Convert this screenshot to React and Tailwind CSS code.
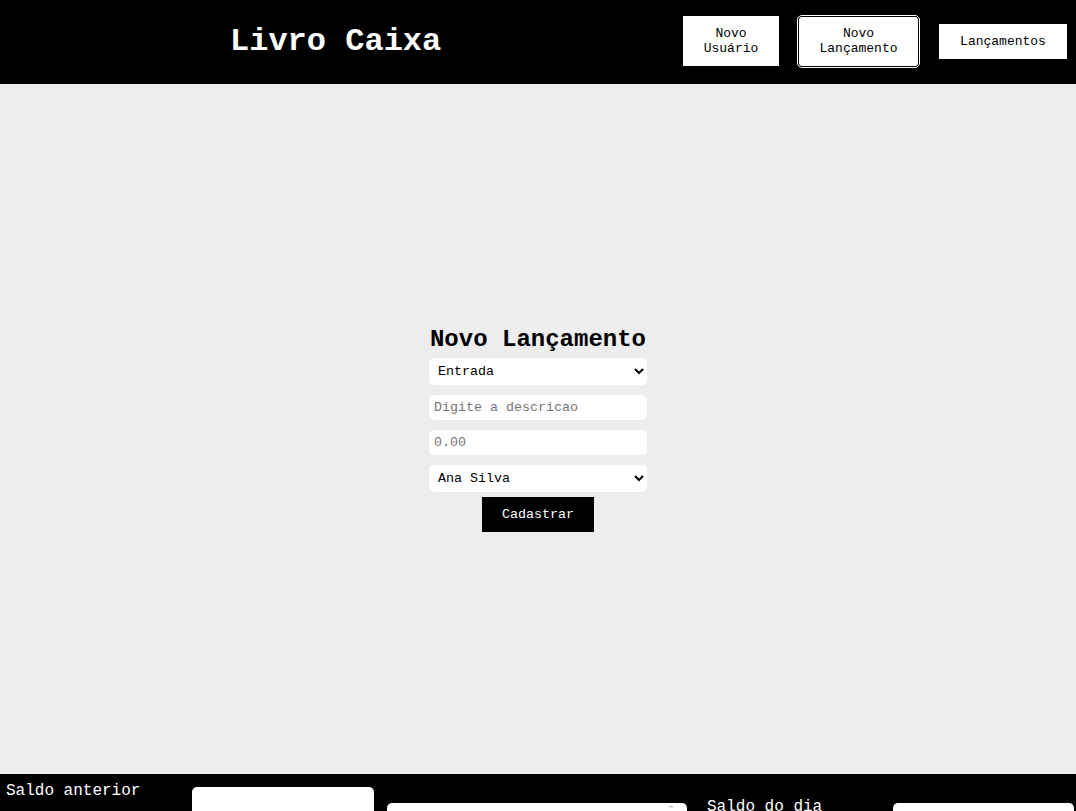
import React from "react";

function Header() {
  return (
    <header className="h-[84px] bg-black flex items-center justify-between pl-[230px] pr-[9px]">
      <h1 className="text-white text-[32px] font-bold leading-none">Livro Caixa</h1>
      <nav className="flex items-center gap-[18px] mb-[2px] text-[13px] leading-[15px] text-black">
        <button className="w-[96px] h-[50px] bg-white px-5 py-[10px] text-center">
          Novo Usuário
        </button>
        <div className="border border-white rounded-[5px] p-[1px] bg-black">
          <button className="w-[119px] h-[49px] bg-white rounded-[3px] px-5 text-center">
            Novo Lançamento
          </button>
        </div>
        <button className="w-[128px] h-[35px] bg-white px-5 ml-[1px]">Lançamentos</button>
      </nav>
    </header>
  );
}

function Form() {
  return (
    <main className="h-[690px] bg-[#ededed] flex items-center justify-center">
      <form className="w-[218px] flex flex-col items-center" onSubmit={(e) => e.preventDefault()}>
        <h2 className="text-[24px] font-bold leading-[27px] mb-[5px] whitespace-nowrap">Novo Lançamento</h2>
        <select className="w-full h-[27px] bg-white rounded-[5px] pl-[5px] pr-[6px] text-[13.33px] outline-none">
          <option>Entrada</option>
          <option>Saída</option>
        </select>
        <input
          className="w-full h-[25px] bg-white rounded-[5px] px-[5px] mt-[10px] text-[13.33px] placeholder:text-[#757575] outline-none"
          placeholder="Digite a descricao"
        />
        <input
          className="w-full h-[25px] bg-white rounded-[5px] px-[5px] mt-[10px] text-[13.33px] placeholder:text-[#757575] outline-none"
          placeholder="0.00"
        />
        <select className="w-full h-[27px] bg-white rounded-[5px] pl-[5px] pr-[6px] mt-[10px] text-[13.33px] outline-none">
          <option>Ana Silva</option>
        </select>
        <button className="mt-[5px] w-[112px] h-[35px] bg-black text-white text-[13.33px]">Cadastrar</button>
      </form>
    </main>
  );
}

function Footer() {
  return (
    <footer className="h-[70px] bg-black flex items-start text-white text-[16px]">
      <p className="ml-[6px] mt-[8px] w-[186px] leading-[18px]">Saldo anterior</p>
      <input className="mt-[13px] w-[182px] h-[30px] bg-white rounded-[5px]" readOnly />
      <div className="ml-[13px] mt-[29px] w-[300px] h-[30px] bg-white rounded-[5px] relative">
        <span className="absolute right-[14px] top-[1px] text-[#777] text-[7px] leading-none">⋯</span>
      </div>
      <p className="ml-[20px] mt-[24px] w-[186px] leading-[18px]">Saldo do dia</p>
      <input className="mt-[29px] w-[181px] h-[30px] bg-white rounded-[5px]" readOnly />
    </footer>
  );
}

export default function App() {
  return (
    <div className="font-['Liberation_Mono','Courier_New',monospace]">
      <Header />
      <Form />
      <Footer />
    </div>
  );
}
